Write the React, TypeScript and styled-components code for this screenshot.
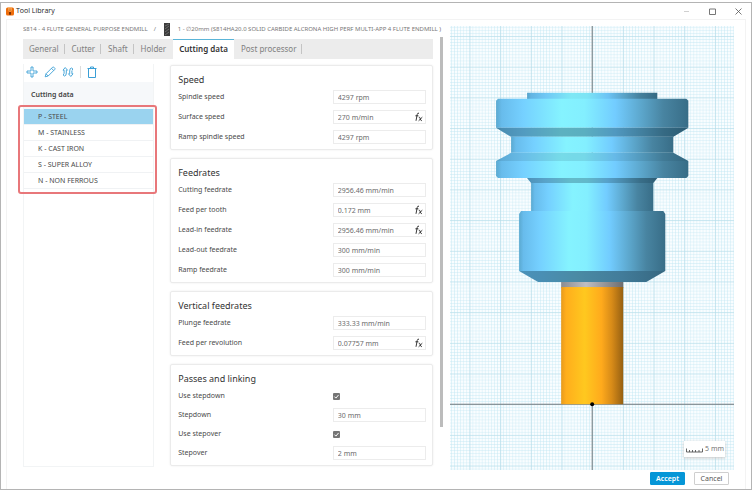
import React, { useState } from "react";
import styled, { createGlobalStyle, css } from "styled-components";

const GlobalStyle = createGlobalStyle`
  * { box-sizing: border-box; }
  body {
    margin: 0;
    background: #fff;
    color: #4a4a4a;
    font: 7px/10px "Noto Sans", "Open Sans", sans-serif;
  }
  button, input { font: inherit; color: inherit; margin: 0; }
  button { cursor: pointer; }
`;

const Window = styled.div`
  display: flex;
  flex-direction: column;
  height: calc(100vh - 4px);
  min-height: 488px;
  margin: 2px 4px 2px 0;
  border: 1px solid #b4b4b4;
  background: #fff;
`;

const TitleBar = styled.header`
  display: flex;
  align-items: center;
  height: 16px;
  padding: 0 9px 0 5px;
  color: #222;
`;

const AppTitle = styled.h1`
  flex: 1;
  margin: 0 0 0 2px;
  font: 7px/10px "Open Sans", sans-serif;
`;

const WindowButtons = styled.div`
  display: flex;
  gap: 19px;
`;

const WindowButton = styled.button`
  display: flex;
  padding: 0;
  border: 0;
  background: none;
`;

const Frame = styled.div`
  flex: 1;
  display: flex;
  flex-direction: column;
  margin: 0 5px;
  padding: 6px 11px 0 16px;
  border: 1px solid #f3f3f3;
  border-bottom: 0;
`;

const Workspace = styled.div`
  flex: 1;
  display: grid;
  grid-template-columns: minmax(0, 3fr) minmax(0, 2fr);
`;

const Editor = styled.section`
  display: flex;
  flex-direction: column;
  min-width: 0;
`;

const Breadcrumbs = styled.nav`
  display: flex;
  align-items: center;
  height: 13px;
  margin: -3px 0 1px;
  overflow: hidden;
  white-space: nowrap;
  font-size: 6px;
  line-height: 13px;
  color: #777;
`;

const Crumb = styled.a`
  color: inherit;
  text-decoration: none;
`;

const CrumbSlash = styled.span`
  margin: 0 8px 0 6px;
`;

const CrumbGap = styled.span`
  width: 8px;
`;

const EditorBody = styled.div`
  flex: 1;
  display: flex;
  gap: 7px;
  padding-right: 7px;
`;

const EditorContent = styled.div`
  flex: 1;
  min-width: 0;
  padding-top: 2px;
`;

const ScrollTrack = styled.div`
  width: 3px;
`;

const ScrollThumb = styled.div`
  height: 90%;
  background: #bcbcbc;
`;

const TabBar = styled.div`
  display: flex;
  gap: 1px;
  height: 20px;
  background: #ececec;
`;

const Tab = styled.button<{ $active?: boolean; $divided?: boolean }>`
  position: relative;
  padding: 0 6px;
  border: 0;
  background: none;
  font-size: 8px;
  line-height: 20px;
  color: #808080;
  white-space: nowrap;
  ${(p) =>
    p.$divided &&
    css`
      &::after {
        content: "";
        position: absolute;
        right: 0;
        top: 5px;
        height: 10px;
        border-right: 1px solid #c4c4c4;
      }
    `}
  ${(p) =>
    p.$active &&
    css`
      background: #fff;
      color: #333;
      font-weight: 600;
      box-shadow: inset 0 1px #5bb5d8;
    `}
`;

const Columns = styled.div`
  display: grid;
  grid-template-columns: minmax(0, 1fr) minmax(0, 2fr);
  gap: 16px;
  padding-top: 5px;
`;

const Sidebar = styled.aside`
  border: 1px solid #f2f4f5;
  border-top: 0;
  background: #fff;
  min-height: 403px;
`;

const Toolbar = styled.div`
  display: flex;
  align-items: center;
  gap: 6px;
  height: 15px;
  padding: 0 2px;
`;

const ToolButton = styled.button`
  display: flex;
  padding: 0;
  border: 0;
  background: none;
  color: #3a9fd6;
`;

const ToolDivider = styled.span`
  width: 1px;
  height: 12px;
  background: #dcdcdc;
`;

const SidebarHeading = styled.h2`
  margin: 3px 0 0;
  padding: 0 7px;
  height: 27px;
  background: #f6f8fa;
  font-size: 7px;
  font-weight: 600;
  line-height: 26px;
  color: #444;
`;

const MaterialList = styled.div`
  position: relative;
  display: flex;
  flex-direction: column;
`;

const ListHighlight = styled.div`
  position: absolute;
  inset: -4px -4px -5px -6px;
  border: 2px solid #e8777a;
  border-radius: 3px;
  pointer-events: none;
`;

const MaterialButton = styled.button<{ $selected: boolean }>`
  height: 16px;
  padding: 0 14px;
  border: 0;
  border-bottom: 1px solid #f0f2f4;
  background: ${(p) => (p.$selected ? "#9ad3ef" : "#fff")};
  text-align: left;
  line-height: 15px;
`;

const Cards = styled.div`
  display: flex;
  flex-direction: column;
  gap: 8px;
  padding-top: 1px;
`;

const Card = styled.section`
  padding: 7px 6px 5px 7px;
  border: 1px solid #ebebeb;
  border-radius: 2px;
  box-shadow: 0 0 2px #e8e8e8;
`;

const CardTitle = styled.h2`
  margin: 0 0 4px;
  font-size: 9px;
  font-weight: 400;
  line-height: 13px;
  color: #333;
`;

const Rows = styled.div<{ $compact?: boolean }>`
  display: flex;
  flex-direction: column;
  gap: ${(p) => (p.$compact ? 5 : 6)}px;
`;

const Row = styled.div`
  display: grid;
  grid-template-columns: minmax(0, 5fr) minmax(0, 3fr);
  align-items: center;
  height: 14px;
`;

const ValueBox = styled.div`
  display: flex;
  align-items: center;
  height: 14px;
  padding-right: 2px;
  border: 1px solid #ececec;
`;

const ValueInput = styled.input`
  flex: 1;
  min-width: 0;
  height: 12px;
  padding: 0 4px;
  border: 0;
  outline: 0;
  background: none;
  color: #6b6b6b;
`;

const FormulaButton = styled.button`
  display: flex;
  padding: 0;
  border: 0;
  background: none;
  color: #222;
`;

const CheckInput = styled.input`
  appearance: none;
  width: 7px;
  height: 7px;
  border-radius: 1px;
  background: #fff;
  border: 1px solid #757575;
  &:checked {
    border: 0;
    background: #757575
      url("data:image/svg+xml,%3Csvg xmlns='http://www.w3.org/2000/svg' viewBox='0 0 7 7'%3E%3Cpath d='M1.4 3.6l1.5 1.5 2.7-3.2' fill='none' stroke='white' stroke-width='1'/%3E%3C/svg%3E");
  }
`;

const Viewer = styled.section`
  position: relative;
  min-height: 444px;
  background: #f9fdff;
`;

const Drawing = styled.svg`
  position: absolute;
  inset: 0;
  display: block;
  width: 100%;
  height: 100%;
`;

const ScaleTag = styled.div`
  position: absolute;
  right: 9px;
  bottom: 13px;
  display: flex;
  align-items: center;
  gap: 2px;
  height: 16px;
  padding: 0 1px 0 2px;
  background: #fff;
  box-shadow: 0 1px 3px #c4c4c4;
  color: #777;
`;

const Footer = styled.footer`
  display: flex;
  justify-content: flex-end;
  gap: 9px;
  height: 19px;
  padding: 2px 5px 4px;
`;

const ActionButton = styled.button<{ $primary?: boolean }>`
  width: 35px;
  height: 13px;
  padding: 0;
  border: 1px solid ${(p) => (p.$primary ? "#0696d7" : "#cfcfcf")};
  border-radius: 1px;
  background: ${(p) => (p.$primary ? "#0696d7" : "#fff")};
  color: ${(p) => (p.$primary ? "#fff" : "#555")};
  font-weight: ${(p) => (p.$primary ? 600 : 400)};
  line-height: 11px;
`;

type Field = { label: string; value?: string; formula?: boolean };
type Group = { title: string; compact?: boolean; fields: Field[] };

const groups: Group[] = [
  {
    title: "Speed",
    fields: [
      { label: "Spindle speed", value: "4297 rpm" },
      { label: "Surface speed", value: "270 m/min", formula: true },
      { label: "Ramp spindle speed", value: "4297 rpm" },
    ],
  },
  {
    title: "Feedrates",
    fields: [
      { label: "Cutting feedrate", value: "2956.46 mm/min" },
      { label: "Feed per tooth", value: "0.172 mm", formula: true },
      { label: "Lead-in feedrate", value: "2956.46 mm/min", formula: true },
      { label: "Lead-out feedrate", value: "300 mm/min" },
      { label: "Ramp feedrate", value: "300 mm/min" },
    ],
  },
  {
    title: "Vertical feedrates",
    fields: [
      { label: "Plunge feedrate", value: "333.33 mm/min" },
      { label: "Feed per revolution", value: "0.07757 mm", formula: true },
    ],
  },
  {
    title: "Passes and linking",
    compact: true,
    fields: [
      { label: "Use stepdown" },
      { label: "Stepdown", value: "30 mm" },
      { label: "Use stepover" },
      { label: "Stepover", value: "2 mm" },
    ],
  },
];

const tabs = ["General", "Cutter", "Shaft", "Holder", "Cutting data", "Post processor"];
const undividedTabs = ["Holder", "Cutting data"];
const materials = ["P - STEEL", "M - STAINLESS", "K - CAST IRON", "S - SUPER ALLOY", "N - NON FERROUS"];

const line = { fill: "none", stroke: "currentColor", strokeWidth: 1 } as const;

const AppIcon = () => (
  <svg width="8" height="9" viewBox="0 0 8 9" aria-hidden="true">
    <rect y=".5" width="8" height="8" rx="1.5" fill="#ee6c0a" />
    <path d="M2 .5h4v3.2L5 4.6H3L2 3.7z" fill="#ffb15c" />
    <path d="M3 5h2v2.8H3z" fill="#7c3304" />
    <path d="M2.4 2h3.2M2.4 3.3h3.2" stroke="#c65100" strokeWidth=".6" />
  </svg>
);

const EndmillThumb = () => (
  <svg width="6" height="13" viewBox="0 0 6 13" aria-hidden="true">
    <rect width="6" height="13" fill="#3c3c3c" />
    <path d="M1 3l4-2M1 6l4-3M1 9l4-3M1 12l4-3" stroke="#808080" strokeWidth=".7" />
  </svg>
);

const PlusIcon = () => (
  <svg width="12" height="12" viewBox="0 0 12 12" aria-hidden="true">
    <path {...line} d="M5 1h2v4h4v2H7v4H5V7H1V5h4z" strokeWidth=".9" />
  </svg>
);

const PencilIcon = () => (
  <svg width="12" height="12" viewBox="0 0 12 12" aria-hidden="true">
    <path {...line} strokeWidth=".9" d="M1.200 10.800l.8-3L8.600 1.200q.6-.5 1.200 0l1 1q.5.6 0 1.200L4.200 10zM7.500 2.300l2.200 2.200M2 7.800l2.200 2.200" />
  </svg>
);

const SwapIcon = () => (
  <svg width="12" height="12" viewBox="0 0 12 12" aria-hidden="true">
    <path {...line} strokeWidth=".9" d="M3.200 1.500L5.500 4.200H4.300V7q0 3-1.800 3Q1 10 1.500 8l.6-.6V4.200H1zM8.800 10.500L6.500 7.800h1.200V5q0-3 1.800-3Q11 2 10.500 4l-.6.6v3.200H11z" />
  </svg>
);

const TrashIcon = () => (
  <svg width="10" height="12" viewBox="0 0 10 12" aria-hidden="true">
    <path {...line} d="M.5 2.500h9M3.500 2.500V1h3v1.500M1.500 2.500v9h7v-9" />
  </svg>
);

const FormulaIcon = () => (
  <svg width="9" height="10" viewBox="0 0 9 10" aria-hidden="true">
    <path {...line} strokeWidth=".9" d="M5 1.200Q3.600.7 3.200 2.500L2 8.800M1.400 3.800h3M4.800 5.200q.9-.2 1.200.8l.7 1.900q.3.900 1.100.7M8.300 5.200L4.600 8.800" />
  </svg>
);

/* Solid-of-revolution profile, in px from the tool tip axis. */
const holderParts: { d: string; fill: string; shade?: number }[] = [
  { d: "M-65-311H65V-304H-65Z", fill: "url(#steel)", shade: 0.06 },
  { d: "M-94-305H94L96-303V-276H-96V-303Z", fill: "url(#steel)" },
  { d: "M-96-276H96L81-267H-81Z", fill: "url(#steel)", shade: 0.36 },
  { d: "M-81-267H81V-251H-81Z", fill: "url(#steel)" },
  { d: "M-81-251H81L96-243H-96Z", fill: "url(#steel)", shade: 0.13 },
  { d: "M-96-243H96V-228L94-226H-94L-96-228Z", fill: "url(#steel)" },
  { d: "M-65-226H65L61-221H-61Z", fill: "url(#steel)", shade: 0.3 },
  { d: "M-61-221H61V-193H-61Z", fill: "url(#steel)" },
  { d: "M-71-193H71L73-190V-133H-73V-190Z", fill: "url(#steel)" },
  { d: "M-73-133H73L54-122H-54Z", fill: "url(#cone)" },
];

const ToolDrawing = () => (
  <Drawing viewBox="-142 -378 284 444" preserveAspectRatio="xMidYMid slice" role="img" aria-label="Tool preview">
    <defs>
      <pattern id="minor" width="3.064" height="3.064" patternUnits="userSpaceOnUse">
        <path d="M0 0H3.064M0 0V3.064" stroke="#c3e8f4" strokeWidth=".8" fill="none" />
      </pattern>
      <pattern id="major" width="30.640" height="30.640" patternUnits="userSpaceOnUse">
        <path d="M0 0H30.640M0 0V30.640" stroke="#b4dbe8" strokeWidth="1.200" fill="none" />
      </pattern>
      <linearGradient id="steel">
        <stop offset="0" stopColor="#5aa9d0" />
        <stop offset=".03" stopColor="#68bcec" />
        <stop offset=".14" stopColor="#75d0ff" />
        <stop offset=".34" stopColor="#85f3ff" />
        <stop offset=".46" stopColor="#83efff" />
        <stop offset=".62" stopColor="#72ccff" />
        <stop offset=".76" stopColor="#5ba5ca" />
        <stop offset=".87" stopColor="#4884a1" />
        <stop offset="1" stopColor="#386d87" />
      </linearGradient>
      <linearGradient id="cone">
        <stop offset="0" stopColor="#4b91b8" />
        <stop offset=".15" stopColor="#4a8fb4" />
        <stop offset=".4" stopColor="#4a8aa4" />
        <stop offset=".7" stopColor="#427c9a" />
        <stop offset="1" stopColor="#366780" />
      </linearGradient>
      <linearGradient id="gold">
        <stop offset="0" stopColor="#e89a1c" />
        <stop offset=".08" stopColor="#ffae1c" />
        <stop offset=".38" stopColor="#ffc81f" />
        <stop offset=".65" stopColor="#ffaa1c" />
        <stop offset=".82" stopColor="#d68a18" />
        <stop offset="1" stopColor="#966012" />
      </linearGradient>
      <linearGradient id="shank">
        <stop offset="0" stopColor="#8c8c90" />
        <stop offset=".4" stopColor="#bebec2" />
        <stop offset="1" stopColor="#6d6d70" />
      </linearGradient>
    </defs>
    <rect x="-600" y="-600" width="1200" height="1200" fill="url(#minor)" />
    <rect x="-600" y="-600" width="1200" height="1200" fill="url(#major)" />
    <path d="M-600 0H600M0-600V600" stroke="#747a7d" strokeWidth="1" />
    <rect x="-31" y="-123" width="62" height="7" fill="url(#shank)" />
    <rect x="-31" y="-117" width="62" height="117" fill="url(#gold)" />
    {holderParts.map((part) => (
      <g key={part.d}>
        <path d={part.d} fill={part.fill} />
        {part.shade && <path d={part.d} fill="#163c50" opacity={part.shade} />}
      </g>
    ))}
    <circle r="2" fill="#000" />
  </Drawing>
);

const RulerIcon = () => (
  <svg width="17" height="10" viewBox="0 0 17 10" aria-hidden="true">
    <path {...line} stroke="#555" strokeWidth=".9" d="M.5 4.500v3.500h16V4.500M3.500 6v2M6.500 6v2M9.500 6v2M13 6v2" />
  </svg>
);

const FieldRow = ({ field }: { field: Field }) => {
  const id = field.label.toLowerCase().replace(/\s/g, "-");
  return (
    <Row>
      <label htmlFor={id}>{field.label}</label>
      {field.value === undefined ? (
        <CheckInput id={id} type="checkbox" defaultChecked />
      ) : (
        <ValueBox>
          <ValueInput id={id} defaultValue={field.value} />
          {field.formula && (
            <FormulaButton aria-label={`${field.label} formula`}>
              <FormulaIcon />
            </FormulaButton>
          )}
        </ValueBox>
      )}
    </Row>
  );
};

export default function App() {
  const [tab, setTab] = useState("Cutting data");
  const [material, setMaterial] = useState(materials[0]);

  return (
    <>
      <GlobalStyle />
      <Window>
        <TitleBar>
          <AppIcon />
          <AppTitle>Tool Library</AppTitle>
          <WindowButtons>
            <WindowButton aria-label="Minimize">
              <svg width="7" height="7" viewBox="0 0 7 7"><path d="M1 3.500h5" stroke="#d0d0d0" /></svg>
            </WindowButton>
            <WindowButton aria-label="Maximize">
              <svg width="7" height="7" viewBox="0 0 7 7"><path {...line} stroke="#777" d="M.5 1h6v5.500h-6z" /></svg>
            </WindowButton>
            <WindowButton aria-label="Close">
              <svg width="7" height="7" viewBox="0 0 7 7"><path {...line} stroke="#555" strokeWidth=".8" d="M.5.5l6 6M6.500.5l-6 6" /></svg>
            </WindowButton>
          </WindowButtons>
        </TitleBar>
        <Frame>
          <Workspace>
            <Editor>
              <Breadcrumbs aria-label="Breadcrumb">
                <Crumb href="#library">S814 - 4 FLUTE GENERAL PURPOSE ENDMILL</Crumb>
                <CrumbSlash>/</CrumbSlash>
                <EndmillThumb />
                <CrumbGap />
                <Crumb href="#tool">
                  1 - ∅20mm (S814HA20.0 SOLID CARBIDE ALCRONA HIGH PERF MULTI-APP 4 FLUTE ENDMILL )
                </Crumb>
              </Breadcrumbs>
              <EditorBody>
                <EditorContent>
                  <TabBar role="tablist">
                    {tabs.map((name) => (
                      <Tab
                        key={name}
                        role="tab"
                        aria-selected={name === tab}
                        $active={name === tab}
                        $divided={!undividedTabs.includes(name)}
                        onClick={() => setTab(name)}
                      >
                        {name}
                      </Tab>
                    ))}
                  </TabBar>
                  <Columns>
                    <Sidebar>
                      <Toolbar>
                        <ToolButton aria-label="Add"><PlusIcon /></ToolButton>
                        <ToolButton aria-label="Edit"><PencilIcon /></ToolButton>
                        <ToolButton aria-label="Reorder"><SwapIcon /></ToolButton>
                        <ToolDivider />
                        <ToolButton aria-label="Delete"><TrashIcon /></ToolButton>
                      </Toolbar>
                      <SidebarHeading>Cutting data</SidebarHeading>
                      <MaterialList>
                        {materials.map((name) => (
                          <MaterialButton
                            key={name}
                            $selected={name === material}
                            aria-pressed={name === material}
                            onClick={() => setMaterial(name)}
                          >
                            {name}
                          </MaterialButton>
                        ))}
                        <ListHighlight />
                      </MaterialList>
                    </Sidebar>
                    <Cards>
                      {groups.map((group) => (
                        <Card key={group.title}>
                          <CardTitle>{group.title}</CardTitle>
                          <Rows $compact={group.compact}>
                            {group.fields.map((field) => (
                              <FieldRow key={field.label} field={field} />
                            ))}
                          </Rows>
                        </Card>
                      ))}
                    </Cards>
                  </Columns>
                </EditorContent>
                <ScrollTrack>
                  <ScrollThumb />
                </ScrollTrack>
              </EditorBody>
            </Editor>
            <Viewer>
              <ToolDrawing />
              <ScaleTag>
                <RulerIcon />
                <span>5 mm</span>
              </ScaleTag>
            </Viewer>
          </Workspace>
          <Footer>
            <ActionButton $primary>Accept</ActionButton>
            <ActionButton>Cancel</ActionButton>
          </Footer>
        </Frame>
      </Window>
    </>
  );
}
